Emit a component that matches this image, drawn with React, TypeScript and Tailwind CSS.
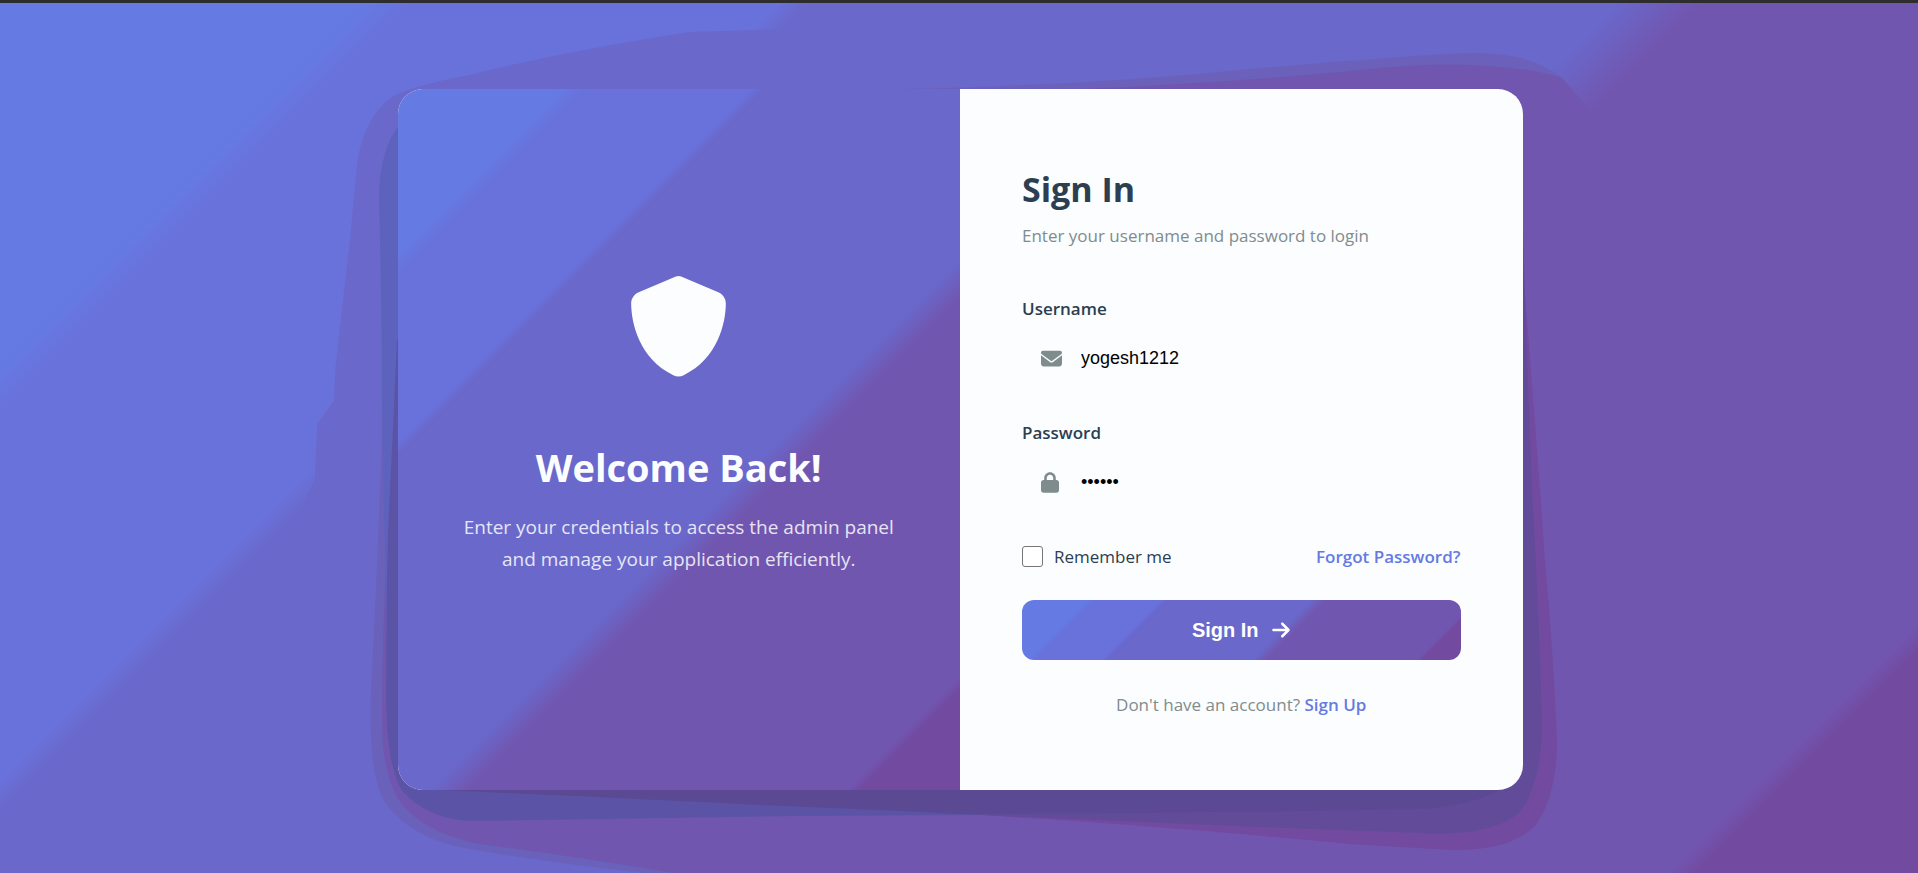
import { useState } from "react";
import { FaArrowRight, FaEnvelope, FaLock, FaShield } from "react-icons/fa6";

const banded =
  "bg-[linear-gradient(135deg,#667ae3_13%,#6971da_15%,#6971da_28%,#6a68cb_29%,#6a68cb_58%,#7156b0_61%,#7156b0_91%,#724ba1_92%)]";

function CardShade() {
  return (
    <svg
      aria-hidden="true"
      viewBox="398 89 1125 700"
      preserveAspectRatio="none"
      className="pointer-events-none absolute inset-0 h-full w-full overflow-visible"
    >
      <path
        fill="#6a68cb"
        d="M820 28L690 32 Q560 52 470 75 Q410 86 390 98 Q362 122 357 165 L350 240 L343 300 L335 372 L334 400 L317 424 L315 480 L300 510 L420 620 L900 100Z"
      />
      <path
        fill="#6a61bb"
        d="M383 410 Q376 600 371 690 Q368 770 384 800 Q410 838 470 848 Q560 864 720 880 L1000 873 L900 400Z"
      />
      <path
        fill="#7156b0"
        d="M386 560 Q382 650 382 720 Q382 770 398 798 Q422 832 480 843 Q560 853 680 873 L1300 873 L900 400Z"
      />
      <path
        fill="#5d62bc"
        d="M400 124 Q379 150 379 200 Q382 300 382 400 Q383 480 386 580 L386 640 L420 640 L420 124Z"
      />
      <path
        fill="#5b54a6"
        d="M397 340 Q393 430 388 530 Q386 620 386 700 Q387 765 402 790 Q428 818 470 820 L800 815 L980 814 L980 700 L420 340Z"
      />
      <path
        fill="#6b61bb"
        d="M900 89 Q1080 86 1250 69 Q1400 56 1470 53 Q1530 52 1562 78 L1540 140 L1300 130Z"
      />
      <path
        fill="#7156b0"
        d="M1080 89 Q1250 82 1390 67 Q1450 62 1500 67 Q1540 70 1562 78 L1590 110 L1540 180 L1300 130Z"
      />
      <path
        fill="#724ba1"
        d="M980 814 Q1180 826 1350 843 L1450 849 Q1510 850 1535 825 Q1557 795 1557 740 Q1554 660 1545 560 Q1536 430 1523 270 L1400 600Z"
      />
      <path
        fill="#624b99"
        d="M960 813 Q1200 824 1420 832 Q1490 836 1519 812 Q1541 785 1542 725 Q1539 610 1533 510 Q1528 400 1523 230 L1400 600Z"
      />
      <path
        fill="#5b4994"
        d="M440 789 Q640 798 760 804 Q880 809 960 813 Q1200 812 1420 808 Q1470 805 1500 789 L1400 700Z"
      />
    </svg>
  );
}

export default function App() {
  const [username, setUsername] = useState("yogesh1212");
  const [password, setPassword] = useState("secret");
  const [remember, setRemember] = useState(false);

  return (
    <div className="flex min-h-screen flex-col border-t-[3px] border-[#2d2d2d] font-['Open_Sans','Noto_Sans',sans-serif] text-[#2c3e50]">
      <main className={`flex flex-1 items-center justify-center overflow-hidden pt-[42px] pr-6 pb-10 pl-[26px] ${banded}`}>
        <div className="relative w-full max-w-[1125px]">
          <CardShade />
          <div className="relative grid overflow-hidden rounded-[25px] bg-[#fbfdff] md:grid-cols-2">
            <section
              className={`flex flex-col items-center justify-center px-12 pb-7 text-center text-[#fbfdff] ${banded}`}
            >
              <FaShield className="size-[101px]" aria-hidden="true" />
              <h1 className="mt-[66px] text-[38px] leading-12 font-bold">Welcome Back!</h1>
              <p className="mt-5 max-w-[440px] text-[19px] leading-8 opacity-85">
                Enter your credentials to access the admin panel and manage your application efficiently.
              </p>
            </section>

            <section className="px-[62px] pt-[76px] pb-[73px]">
              <h2 className="text-[34px] leading-12 font-bold">Sign In</h2>
              <p className="mt-[11px] text-[17px] leading-6 text-[#7f8c8d]">
                Enter your username and password to login
              </p>

              <form className="mt-[49px]" onSubmit={(e) => e.preventDefault()}>
                <label htmlFor="username" className="block text-[17px] leading-6 font-semibold">
                  Username
                </label>
                <div className="mt-[10px] flex h-14 items-center gap-[19px] pl-[19px]">
                  <FaEnvelope className="size-[21px] text-[#7f8c8d]" aria-hidden="true" />
                  <input
                    id="username"
                    type="text"
                    value={username}
                    onChange={(e) => setUsername(e.target.value)}
                    className="h-full min-w-0 flex-1 bg-transparent font-['Liberation_Sans',sans-serif] text-[18px] text-black outline-none"
                  />
                </div>

                <label htmlFor="password" className="mt-[34px] block text-[17px] leading-6 font-semibold">
                  Password
                </label>
                <div className="mt-[10px] flex h-14 items-center gap-[19px] pl-[19px]">
                  <span className="flex w-[21px]">
                    <FaLock className="h-[21px] w-[18px] text-[#7f8c8d]" aria-hidden="true" />
                  </span>
                  <input
                    id="password"
                    type="password"
                    value={password}
                    onChange={(e) => setPassword(e.target.value)}
                    className="h-full min-w-0 flex-1 bg-transparent font-['Liberation_Sans',sans-serif] text-[18px] text-black outline-none"
                  />
                </div>

                <div className="mt-[34px] flex items-center justify-between text-[17px] leading-6">
                  <label className="flex items-center gap-[11px]">
                    <input
                      type="checkbox"
                      checked={remember}
                      onChange={(e) => setRemember(e.target.checked)}
                      className="size-[21px] appearance-none rounded-[3px] border border-[#767676] bg-white checked:bg-[#667ae3]"
                    />
                    Remember me
                  </label>
                  <a href="#forgot" className="font-semibold text-[#667ae3]">
                    Forgot Password?
                  </a>
                </div>

                <button
                  type="submit"
                  className={`mt-[31px] flex h-[60px] w-full items-center justify-center gap-3 rounded-[12px] font-['Liberation_Sans',sans-serif] text-[20px] font-bold text-white ${banded}`}
                >
                  Sign In
                  <FaArrowRight className="size-5" aria-hidden="true" />
                </button>
              </form>

              <p className="mt-[33px] text-center text-[17px] leading-6 text-[#7f8c8d]">
                Don't have an account?{" "}
                <a href="#signup" className="font-semibold text-[#667ae3]">
                  Sign Up
                </a>
              </p>
            </section>
          </div>
        </div>
      </main>
    </div>
  );
}
